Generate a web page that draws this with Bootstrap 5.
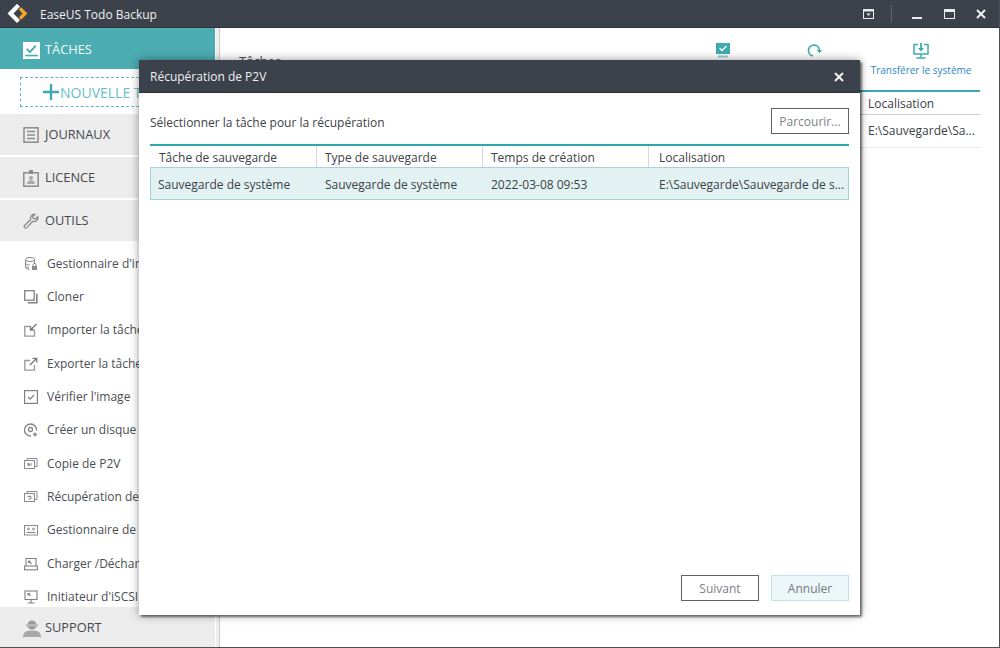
<!DOCTYPE html>
<html lang="fr">
<head>
<meta charset="utf-8">
<title>EaseUS Todo Backup</title>
<link href="https://cdn.jsdelivr.net/npm/bootstrap@5.3.0/dist/css/bootstrap.min.css" rel="stylesheet">
<style>
html,body{height:100%;margin:0;overflow:hidden}
body{font-family:"Open Sans","Noto Sans","Liberation Sans",sans-serif;font-size:12px;color:#3c4147;background:#fff}
.app-shell{width:1000px;height:648px;position:relative;display:flex;flex-direction:column;border-right:1px solid #4a4f55;border-bottom:1px solid #4a4f55;overflow:hidden}
.title-strip{height:28px;flex:none;background:#3c424b;color:#eef0f1;font-size:12px;padding-left:7px;border-bottom:1px solid #2e3238}
.app-title{margin-left:10px;padding-top:2px}
.win-btns{margin-left:auto;height:100%}
.win-sep{width:1px;height:17px;background:#5f646b;margin:0 17px 0 15px}
.win-btn{width:16px;display:flex;justify-content:center;margin-right:16px}
.app-body{flex:1;min-height:0}
.side-col{width:215px;flex:none;display:flex;flex-direction:column;height:100%}
.side-split{width:5px;flex:none;background:#efefef;border-right:1px solid #c9c9c9;border-left:1px solid #fff}
.main-col{flex:1;min-width:0;padding:0 19px;position:relative}
.sec-item{height:41px;flex:none;display:flex;align-items:center;padding:0 0 0 23px;gap:6px;background:#ececec;color:#45494e;font-size:12.8px;margin-bottom:2px}
.sec-item.is-active{background:#4bacb2;color:#f3fbfb;margin-bottom:0;padding-top:3px}
.new-wrap{height:45px;flex:none;padding:8px 0 7px 20px}
.new-task{height:30px;border:1px dashed #63b9bf;display:flex;align-items:center;padding-left:22px;color:#66c0c8;font-size:14px;white-space:nowrap;overflow:hidden}
.tool-list{flex:1;list-style:none;margin:0;padding:4px 0 0 0;min-height:0;overflow:hidden}
.tool-list li{height:33.35px;display:flex;align-items:center;padding-left:24px;gap:9px;color:#4a4e53;white-space:nowrap}
.sec-bottom{margin:0;padding:2px 0 0 23px;height:40px;gap:4px}
.tool-ico{width:14px;height:14px;flex:none}
.page-head{height:62px;display:flex;position:relative}
.page-title{font-size:13px;padding-top:24px;color:#4a4e53}
.tool-act{position:absolute;top:15px;display:flex;flex-direction:column;align-items:center;gap:4px;width:110px;color:#2f86c0;font-size:10px;white-space:nowrap}
.main-grid{width:100%;table-layout:fixed;border-collapse:collapse;color:#3c4147}
.main-grid th{font-weight:400;height:23px;border-top:2px solid #39aab0;border-bottom:1px solid #cfcfcf;padding:2px 8px 0}
.main-grid td{height:33px;border-bottom:1px solid #e6e6e6;padding:0 8px;white-space:nowrap;overflow:hidden}
.dlg{position:absolute;left:139px;top:60px;width:721px;height:555px;background:#fff;display:flex;flex-direction:column;box-shadow:2px 2px 2px rgba(0,0,0,.5),0 0 9px rgba(0,0,0,.4)}
.dlg-head{height:33px;flex:none;background:#3c424b;color:#eef0f1;padding:2px 11px 0;border-bottom:1px solid #2e3238}
.dlg-close{margin-left:auto;margin-right:5px;display:flex}
.dlg-body{flex:1;padding:15px 11px 14px 11px;display:flex;flex-direction:column;min-height:0}
.dlg-top{height:26px;margin-bottom:10px}
.dlg-top>span{padding-top:3px}
.soft-btn{width:78px;height:26px;padding:1px 0 0;background:#fff;border:1px solid #5f6368;border-radius:0;color:#7d8184;font-size:12px;line-height:1}
.soft-btn.is-muted{background:#edf6f8;border-color:#bfe3e8;color:#74787b}
.soft-btn:hover{background:#fff;border-color:#5f6368;color:#7d8184}
.dlg-grid{width:699px;table-layout:fixed;border-collapse:separate;border-spacing:0;border-top:2px solid #2fa6ad;color:#3c4147}
.dlg-grid th{font-weight:400;height:21px;padding:2px 8px 0;border-right:1px solid #d8d8d8;white-space:nowrap}
.dlg-grid th:first-child{padding-left:9px}
.dlg-grid th:last-child{border-right:0;padding-left:10px}
.dlg-grid td{height:33px;padding:2px 8px 0;background:#e2f1f2;border-top:1px solid #a5d3d7;border-bottom:1px solid #a5d3d7;white-space:nowrap;overflow:hidden}
.dlg-grid td:first-child{border-left:1px solid #a5d3d7;padding-left:7px}
.dlg-grid td:last-child{border-right:1px solid #a5d3d7;padding-left:10px}
.dlg-foot{margin-top:auto;gap:12px}
</style>
</head>
<body>
<div class="app-shell">
  <header class="title-strip d-flex align-items-center">
    <svg width="23" height="21" viewBox="0 0 23 21" class="flex-none"><path d="M11.500 2.300 3.500 10.500l8 8" fill="none" stroke="#fff" stroke-width="4.200" stroke-linejoin="miter"/><path d="M13 5.500l5 5-5 5" fill="none" stroke="#f5a623" stroke-width="3.400"/></svg>
    <span class="app-title">EaseUS Todo Backup</span>
    <div class="win-btns d-flex align-items-center">
      <span class="win-btn" style="margin-right:0"><svg width="11" height="10" viewBox="0 0 11 10"><rect x=".5" y=".5" width="10" height="9" fill="none" stroke="#e8eaeb"/><rect x=".5" y=".5" width="10" height="2" fill="#e8eaeb"/><path d="M3.500 4.500h4L5.500 7z" fill="#e8eaeb"/></svg></span>
      <span class="win-sep"></span>
      <span class="win-btn"><svg width="10" height="10" viewBox="0 0 10 10"><rect y="8" width="10" height="2" fill="#e8eaeb"/></svg></span>
      <span class="win-btn"><svg width="11" height="10" viewBox="0 0 11 10"><rect x=".5" y=".5" width="10" height="9" fill="none" stroke="#e8eaeb"/><rect width="11" height="3" fill="#e8eaeb"/></svg></span>
      <span class="win-btn" style="margin-right:10px"><svg width="10" height="10" viewBox="0 0 10 10"><path d="M1 1l8 8M9 1 1 9" stroke="#f2f3f4" stroke-width="2"/></svg></span>
    </div>
  </header>
  <div class="app-body d-flex">
    <nav class="side-col">
      <div class="sec-item is-active">
        <svg width="17" height="17" viewBox="0 0 16 16"><rect width="16" height="16" fill="#fff"/><path d="M3.500 6.500l3 3 5.500-6" fill="none" stroke="#4bacb2" stroke-width="1.800"/><rect x="2" y="12" width="12" height="1.500" fill="#4bacb2"/></svg>
        <span style="margin-left:-1px">TÂCHES</span>
      </div>
      <div class="new-wrap">
        <div class="new-task">
          <svg width="16" height="16" viewBox="0 0 16 16" class="flex-none"><path d="M8 0v16M0 8h16" stroke="#3fa9af" stroke-width="2.400"/></svg>
          <span style="margin-left:1px">NOUVELLE TÂCHE</span>
        </div>
      </div>
      <div class="sec-item">
        <svg width="16" height="16" viewBox="0 0 16 16"><rect x="1" y=".8" width="14" height="14.400" fill="none" stroke="#8c8c8c" stroke-width="1.500"/><path d="M4 4.500h8M4 8h8M4 11.500h8" stroke="#8c8c8c" stroke-width="1.300"/></svg>
        <span>JOURNAUX</span>
      </div>
      <div class="sec-item">
        <svg width="16" height="18" viewBox="0 0 16 18"><rect x=".8" y="3.800" width="14.400" height="13.400" fill="none" stroke="#8c8c8c" stroke-width="1.500"/><rect x="6" y="1" width="4" height="4" fill="#8c8c8c"/><circle cx="8" cy="9" r="2" fill="#a8a8a8"/><path d="M4 15c0-5 8-5 8 0z" fill="#a8a8a8"/></svg>
        <span>LICENCE</span>
      </div>
      <div class="sec-item">
        <svg width="16" height="16" viewBox="0 0 16 16"><path d="M15 4.500a4 4 0 0 1-5.300 3.800L3.800 14.600a1.400 1.400 0 0 1-2.200-2.100l6.100-6A4 4 0 0 1 12 1.300L9.800 3.500l.4 2 2 .5L14.600 3.800z" fill="none" stroke="#8c8c8c" stroke-width="1.300"/></svg>
        <span>OUTILS</span>
      </div>
      <ul class="tool-list">
        <li><svg class="tool-ico" viewBox="0 0 14 14" fill="none" stroke="#8a8a8a"><ellipse cx="6" cy="2.500" rx="4.500" ry="2"/><path d="M1.500 2.500v8c0 1 2 1.800 4 1.800M1.500 6c0 1 2 2 4.500 2M1.500 9c0 1 2 1.500 3.500 1.500M10.500 2.500V7"/><rect x="8" y="9" width="5" height="4" fill="#8a8a8a" stroke="none"/><path d="M9 9V7.800a1.500 1.500 0 0 1 3 0V9"/></svg><span>Gestionnaire d'images</span></li>
        <li><svg class="tool-ico" viewBox="0 0 14 14" fill="none" stroke="#808080" stroke-width="1.300"><rect x=".7" y=".7" width="9.500" height="9.500"/><path d="M12.800 3.800v9H3.800" stroke-width="1.600"/></svg><span>Cloner</span></li>
        <li><svg class="tool-ico" viewBox="0 0 14 14" fill="none" stroke="#999"><path d="M6 3.500H.8v9.700h9.700V8" stroke-width="1.300"/><path d="M12.500 1 6.500 7M6.500 3v4h4" stroke="#777" stroke-width="1.300"/></svg><span>Importer la tâche</span></li>
        <li><svg class="tool-ico" viewBox="0 0 14 14" fill="none" stroke="#999"><path d="M6 3.500H.8v9.700h9.700V8" stroke-width="1.300"/><path d="M6 8l6.500-6.500M8.500 1.300h4.200v4.200" stroke="#777" stroke-width="1.300"/></svg><span>Exporter la tâche</span></li>
        <li><svg class="tool-ico" viewBox="0 0 14 14" fill="none" stroke="#808080"><rect x=".6" y=".6" width="12.800" height="12.800" stroke-width="1.200"/><path d="M4 7l2.200 2.200L10 5" stroke-width="1.200"/></svg><span>Vérifier l'image</span></li>
        <li><svg class="tool-ico" viewBox="0 0 14 14" fill="none" stroke="#888" stroke-width="1.300"><path d="M12.500 7.500A6 6 0 1 0 7 13"/><circle cx="6.500" cy="6.500" r="2"/><path d="M11 9.500v4M9 11.500h4"/></svg><span>Créer un disque d'urgence</span></li>
        <li><svg class="tool-ico" viewBox="0 0 14 14" fill="none" stroke="#8a8a8a"><rect x=".5" y="3.500" width="10" height="8"/><path d="M3 3.500V1.500h10v8h-2.500"/><path d="M4 6v3l2-1.500z" fill="#8a8a8a"/><path d="M7 6v3"/></svg><span>Copie de P2V</span></li>
        <li><svg class="tool-ico" viewBox="0 0 14 14" fill="none" stroke="#8a8a8a"><rect x=".5" y="3.500" width="10" height="8"/><path d="M3 3.500V1.500h10v8h-2.500"/><path d="M4 6.500h3v2.500H4.500M5 5.500l-1 1 1 1"/></svg><span>Récupération de P2V</span></li>
        <li><svg class="tool-ico" viewBox="0 0 14 14" fill="none" stroke="#8a8a8a"><rect x=".5" y="2.500" width="13" height="9.500"/><circle cx="4.500" cy="6" r="1"/><circle cx="9.500" cy="6" r="1"/><path d="M2.500 9.500h9" stroke-width="1.200"/></svg><span>Gestionnaire de bandes</span></li>
        <li><svg class="tool-ico" viewBox="0 0 14 14" fill="none" stroke="#808080" stroke-width="1.100"><path d="M2 9V1.500h10V9"/><rect x=".6" y="9" width="12.800" height="3.800"/><path d="M4.500 4l3 3M4.500 4v2M4.500 4h2"/></svg><span>Charger /Décharger</span></li>
        <li><svg class="tool-ico" viewBox="0 0 14 14" fill="none" stroke="#808080" stroke-width="1.100"><rect x="1" y="1" width="12" height="8.500"/><path d="M7 9.500v3M3.500 13h7"/><path d="M4 3.500l2.500 2.500M4 3.500v2M4 3.500h2"/></svg><span>Initiateur d'iSCSI</span></li>
      </ul>
      <div class="sec-item sec-bottom">
        <svg width="18" height="18" viewBox="0 0 18 18"><circle cx="9" cy="6" r="4.500" fill="#9a9a9a"/><path d="M0 18c0-6 5-6.500 9-6.500s9 .5 9 6.500z" fill="#a8a8a8"/><rect x="3" y="5" width="12" height="2.500" rx="1" fill="#b8b8b8"/></svg>
        <span>SUPPORT</span>
      </div>
    </nav>
    <div class="side-split"></div>
    <main class="main-col">
      <div class="page-head">
        <div class="page-title">Tâches</div>
        <div class="tool-act" style="left:429px"><svg width="14" height="15" viewBox="0 0 14 15"><rect width="14" height="11" fill="#3fa9af"/><path d="M3.500 5l2.500 2.500L10.500 3" fill="none" stroke="#fff" stroke-width="1.300"/><rect x="2" y="12.500" width="10" height="2" fill="#8fd0d4"/></svg></div>
        <div class="tool-act" style="left:520px"><svg width="15" height="15" viewBox="0 0 15 15"><path d="M6 13A5.500 5.500 0 1 1 12.500 7.500" fill="none" stroke="#3fa9af" stroke-width="1.700"/><path d="M9.800 7h5.200l-2.600 3.200z" fill="#3fa9af"/></svg></div>
        <div class="tool-act" style="left:627px"><svg width="16" height="16" viewBox="0 0 16 16"><path d="M5 1.500H1v9.500h14V1.500h-4" fill="none" stroke="#3fa9af" stroke-width="1.500"/><path d="M8 0v7" stroke="#3fa9af" stroke-width="1.800"/><path d="M5 5h6L8 8.500z" fill="#3fa9af"/><path d="M8 11v3M3.500 15h9" stroke="#3fa9af" stroke-width="1.500"/></svg><span>Transférer le système</span></div>
      </div>
      <table class="main-grid">
        <colgroup><col style="width:621px"><col style="width:120px"></colgroup>
        <thead><tr><th></th><th>Localisation</th></tr></thead>
        <tbody><tr><td></td><td>E:\Sauvegarde\Sa...</td></tr></tbody>
      </table>
    </main>
  </div>

  <section class="dlg">
    <div class="dlg-head d-flex align-items-center">
      <span>Récupération de P2V</span>
      <span class="dlg-close"><svg width="10" height="10" viewBox="0 0 10 10"><path d="M1 1l8 8M9 1 1 9" stroke="#f2f3f4" stroke-width="2"/></svg></span>
    </div>
    <div class="dlg-body">
      <div class="dlg-top d-flex align-items-center justify-content-between">
        <span>Sélectionner la tâche pour la récupération</span>
        <button type="button" class="btn soft-btn">Parcourir...</button>
      </div>
      <table class="dlg-grid">
        <colgroup><col style="width:167px"><col style="width:166px"><col style="width:166px"><col></colgroup>
        <thead><tr><th>Tâche de sauvegarde</th><th>Type de sauvegarde</th><th>Temps de création</th><th>Localisation</th></tr></thead>
        <tbody><tr><td>Sauvegarde de système</td><td>Sauvegarde de système</td><td>2022-03-08 09:53</td><td>E:\Sauvegarde\Sauvegarde de s...</td></tr></tbody>
      </table>
      <div class="dlg-foot d-flex justify-content-end">
        <button type="button" class="btn soft-btn">Suivant</button>
        <button type="button" class="btn soft-btn is-muted">Annuler</button>
      </div>
    </div>
  </section>
</div>
<script src="https://cdn.jsdelivr.net/npm/bootstrap@5.3.0/dist/js/bootstrap.bundle.min.js"></script>
</body>
</html>
